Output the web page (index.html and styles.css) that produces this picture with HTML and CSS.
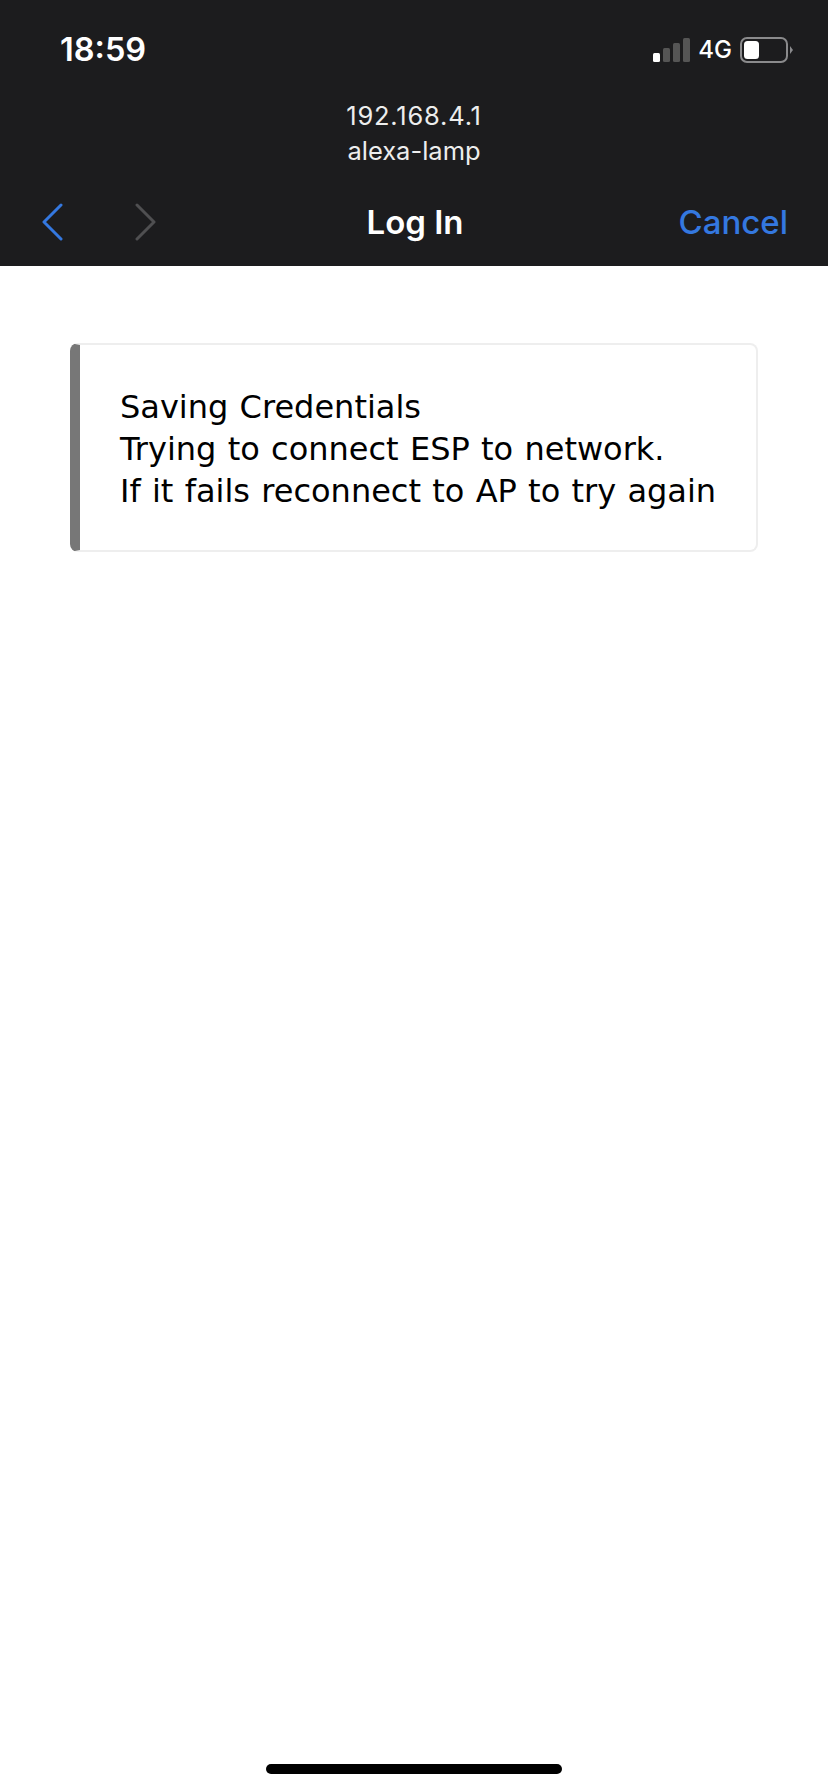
FILE: index.html
```html
<!DOCTYPE html>
<html lang="en">
<head>
    <meta charset="UTF-8">
    <title>Log In</title>
    <link rel="stylesheet" href="styles.css">
</head>
<body>
    <div class="page">
        <header class="top">
            <div class="status">
                <span class="time">18:59</span>
                <div class="status_right">
                    <svg class="signal" width="38" height="24" viewBox="0 0 38 24">
                        <rect x="0" y="15" width="7" height="9" rx="1.5" fill="#fff"/>
                        <rect x="10" y="10" width="7" height="14" rx="1.5" fill="#555"/>
                        <rect x="20" y="5" width="7" height="19" rx="1.5" fill="#555"/>
                        <rect x="30" y="0" width="7" height="24" rx="1.5" fill="#555"/>
                    </svg>
                    <span class="net">4G</span>
                    <svg class="battery" width="54" height="26" viewBox="0 0 54 26">
                        <rect x="1" y="1" width="46" height="24" rx="6" fill="none" stroke="#8a8a8c" stroke-width="2"/>
                        <rect x="4" y="4" width="15" height="18" rx="3.5" fill="#fff"/>
                        <path d="M50 9l3 4-3 4z" fill="#8a8a8c"/>
                    </svg>
                </div>
            </div>
            <div class="address">
                <div class="ip">192.168.4.1</div>
                <div>alexa-lamp</div>
            </div>
            <nav class="nav">
                <div class="arrows">
                    <svg width="24" height="38" viewBox="0 0 24 38">
                        <path d="M20 2L3 19l17 17" fill="none" stroke="#3478e0" stroke-width="3" stroke-linecap="round" stroke-linejoin="round"/>
                    </svg>
                    <svg width="24" height="38" viewBox="0 0 24 38">
                        <path d="M3 2l17 17L3 36" fill="none" stroke="#4f4f51" stroke-width="3" stroke-linecap="round" stroke-linejoin="round"/>
                    </svg>
                </div>
                <div class="title">Log In</div>
                <div class="cancel">Cancel</div>
            </nav>
        </header>
        <main class="content">
            <div class="card">
                Saving Credentials<br>
                Trying to connect ESP to network.<br>
                If it fails reconnect to AP to try again
            </div>
        </main>
        <div class="home_bar"></div>
    </div>
</body>
</html>
```

FILE: styles.css
```css
*{
    box-sizing: border-box;
}
body{
    margin: 0;
    background: #fff;
    font-family: Inter, "Liberation Sans", sans-serif;
}
.page{
    height: 1792px;
    display: flex;
    flex-direction: column;
}
.top{
    height: 266px;
    background: #1c1c1e;
    color: #fff;
    display: flex;
    flex-direction: column;
}
.status{
    height: 98px;
    padding: 1px 34px 0 60px;
    display: flex;
    justify-content: space-between;
    align-items: center;
}
.time{
    font-size: 32.5px;
    font-weight: 600;
}
.status_right{
    display: flex;
    align-items: center;
    gap: 7px;
}
.net{
    font-size: 24px;
    font-weight: 500;
}
.battery{
    margin-left: 1px;
}
.address{
    height: 70px;
    text-align: center;
    font-size: 25.5px;
    line-height: 35px;
    color: #ededed;
}
.ip{
    letter-spacing: 0.8px;
}
.nav{
    flex: 1;
    padding: 10px 40px 0 41px;
    display: flex;
    align-items: center;
    justify-content: space-between;
    position: relative;
}
.arrows{
    display: flex;
    gap: 69px;
}
.arrows svg{
    display: block;
}
.title{
    font-size: 33px;
    font-weight: 600;
    position: absolute;
    left: 2px;
    right: 0;
    text-align: center;
}
.cancel{
    font-size: 33px;
    font-weight: 500;
    color: #3478e0;
}
.content{
    flex: 1;
    padding: 77px 70px 0;
}
.card{
    width: 688px;
    height: 209px;
    padding: 41px 0 0 40px;
    border: 2px solid #eeeeee;
    border-left: 10px solid #777777;
    border-radius: 8px;
    font-family: "DejaVu Sans", sans-serif;
    font-size: 32px;
    line-height: 42px;
    word-spacing: 1.1px;
    color: #000;
}
.home_bar{
    width: 296px;
    height: 10px;
    margin: 0 auto 18px;
    border-radius: 5px;
    background: #000;
}
```
